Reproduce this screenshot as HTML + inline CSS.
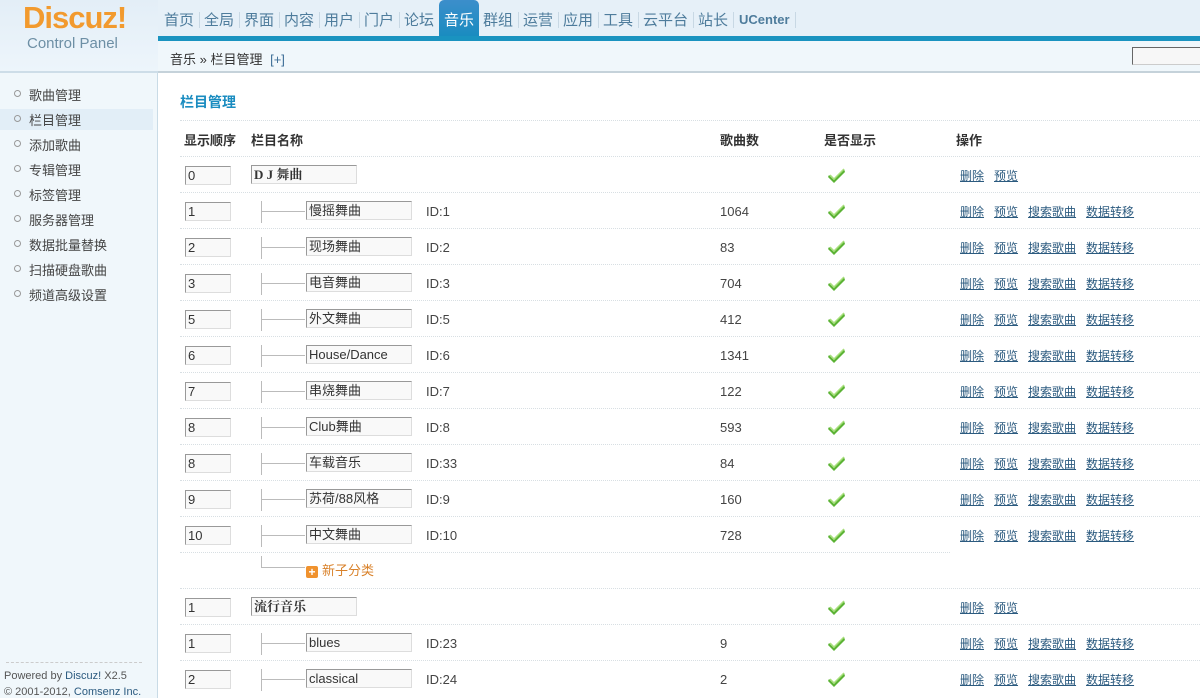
<!DOCTYPE html>
<html><head><meta charset="utf-8"><style>
*{margin:0;padding:0;box-sizing:border-box}
body{width:1200px;height:698px;overflow:hidden;background:#fff;font-family:"Liberation Sans","Noto Sans CJK SC",sans-serif;font-size:12px;color:#333;position:relative}
.abs{position:absolute}
#side{left:0;top:0;width:158px;height:698px;background:#f0f7fb;border-right:1px solid #c9dbe6}
#logohd{left:0;top:0;width:158px;height:73px;background:linear-gradient(#e3eef7,#edf5fb);border-bottom:2px solid #cddde8}
#top{left:158px;top:0;width:1042px;height:36px;background:#e6f0f8}
#bar{left:158px;top:36px;width:1042px;height:5px;background:#1a93c0}
#crumb{left:158px;top:41px;width:1042px;height:32px;background:#f0f7fb;border-bottom:2px solid #c5d2da}
.nav{position:absolute;top:9px;font-size:15px;color:#4e7c9c}
.sep{position:absolute;top:12px;width:1px;height:16px;background:#c8d8e4}
.menu{position:absolute;left:14px;font-size:13px;color:#444}
.menu:before{content:"";position:absolute;left:0;top:5px;width:5px;height:5px;border:1px solid #999;border-radius:50%}
.menu span{margin-left:15px}
.inp{position:absolute;height:19px;border:1px solid #999;border-right-color:#ddd;border-bottom-color:#ddd;background:#f9f9f9;font-size:13px;padding-left:2px;line-height:17px;color:#333}
.row{position:absolute;left:180px;width:1020px;height:36px;border-top:1px dotted #d8dfe3}
.tv{position:absolute;left:81px;top:8px;width:1px;height:22px;background:#bbb}
.th{position:absolute;left:81px;top:18px;width:44px;height:1px;background:#bbb}
.ops{position:absolute;left:780px;top:10px;font-size:12px;color:#2b5a7f}
.ops a{text-decoration:underline;color:#2b5a7f;margin-right:10px}
.ck{position:absolute;left:648px;top:10px}
.t{position:absolute;top:11px;font-size:13px;color:#444}
</style></head><body>
<div id="side" class="abs"></div>
<div id="logohd" class="abs">
<div class="abs" style="left:23px;top:0px;font-size:31px;font-weight:bold;color:#f29a2e;letter-spacing:-1px">Discuz!</div>
<div class="abs" style="left:27px;top:35px;font-size:15px;color:#6d8fa5">Control Panel</div>
</div>
<div id="top" class="abs"></div>
<div id="bar" class="abs"></div>
<div id="crumb" class="abs">
<div class="abs" style="left:12px;top:8px;font-size:13px;color:#333">音乐 » 栏目管理 <span style="color:#3c6d96;margin-left:4px">[+]</span></div>
<div class="abs" style="left:974px;top:6px;width:70px;height:18px;border:1px solid #666;border-right:none;border-bottom-color:#ccc;background:#f7f7f7"></div>
</div>
<div class="abs" style="left:439px;top:0;width:40px;height:36px;background:linear-gradient(#3c8ecb,#1a8cc0);border-radius:5px 5px 0 0"></div>
<span class="nav" style="left:164px">首页</span><i class="sep" style="left:199px"></i>
<span class="nav" style="left:204px">全局</span><i class="sep" style="left:239px"></i>
<span class="nav" style="left:244px">界面</span><i class="sep" style="left:279px"></i>
<span class="nav" style="left:284px">内容</span><i class="sep" style="left:319px"></i>
<span class="nav" style="left:324px">用户</span><i class="sep" style="left:359px"></i>
<span class="nav" style="left:364px">门户</span><i class="sep" style="left:399px"></i>
<span class="nav" style="left:404px">论坛</span>
<span class="nav" style="left:444px;color:#fff">音乐</span>
<span class="nav" style="left:483px">群组</span><i class="sep" style="left:518px"></i>
<span class="nav" style="left:523px">运营</span><i class="sep" style="left:558px"></i>
<span class="nav" style="left:563px">应用</span><i class="sep" style="left:598px"></i>
<span class="nav" style="left:603px">工具</span><i class="sep" style="left:638px"></i>
<span class="nav" style="left:643px">云平台</span><i class="sep" style="left:693px"></i>
<span class="nav" style="left:698px">站长</span><i class="sep" style="left:733px"></i>
<span class="nav" style="left:739px;font-size:13px;font-weight:bold;top:12px">UCenter</span><i class="sep" style="left:795px"></i>

<div class="menu" style="top:85px"><span>歌曲管理</span></div>
<div class="abs" style="left:0;top:109px;width:153px;height:21px;background:#e2eef7"></div>
<div class="menu" style="top:110px"><span>栏目管理</span></div>
<div class="menu" style="top:135px"><span>添加歌曲</span></div>
<div class="menu" style="top:160px"><span>专辑管理</span></div>
<div class="menu" style="top:185px"><span>标签管理</span></div>
<div class="menu" style="top:210px"><span>服务器管理</span></div>
<div class="menu" style="top:235px"><span>数据批量替换</span></div>
<div class="menu" style="top:260px"><span>扫描硬盘歌曲</span></div>
<div class="menu" style="top:285px"><span>频道高级设置</span></div>
<div class="abs" style="left:6px;top:662px;width:136px;border-top:1px dashed #ccc"></div>
<div class="abs" style="left:4px;top:668px;font-size:11px;color:#555;line-height:16px">Powered by <span style="color:#2b5a7f">Discuz!</span> X2.5<br>© 2001-2012, <span style="color:#2b5a7f">Comsenz Inc.</span></div>

<div class="abs" style="left:180px;top:92px;font-size:14px;font-weight:bold;color:#1a8cc0">栏目管理</div>
<div class="abs" style="left:180px;top:120px;width:1020px;border-top:1px dotted #d8dfe3"></div>
<div class="abs" style="left:184px;top:130px;font-size:13px;font-weight:bold;color:#333">显示顺序</div>
<div class="abs" style="left:251px;top:130px;font-size:13px;font-weight:bold;color:#333">栏目名称</div>
<div class="abs" style="left:720px;top:130px;font-size:13px;font-weight:bold;color:#333">歌曲数</div>
<div class="abs" style="left:824px;top:130px;font-size:13px;font-weight:bold;color:#333">是否显示</div>
<div class="abs" style="left:956px;top:130px;font-size:13px;font-weight:bold;color:#333">操作</div>

<svg width="0" height="0" style="position:absolute"><defs><g id="chk"><path d="M1 8 L6 13 L16 2 L17 5 L6 16 L0 10 Z" fill="#5cb335"/><path d="M2 8 L6 12 L16 2" stroke="#a8e07c" stroke-width="1.5" fill="none"/></g></defs></svg>
<div id="rows"></div>
<script>
var d=[["0","D J 舞曲","","",1,0],["1","慢摇舞曲","ID:1","1064",0,1],["2","现场舞曲","ID:2","83",0,1],["3","电音舞曲","ID:3","704",0,1],["5","外文舞曲","ID:5","412",0,1],["6","House/Dance","ID:6","1341",0,1],["7","串烧舞曲","ID:7","122",0,1],["8","Club舞曲","ID:8","593",0,1],["8","车载音乐","ID:33","84",0,1],["9","苏荷/88风格","ID:9","160",0,1],["10","中文舞曲","ID:10","728",0,1],null,["1","流行音乐","","",1,0],["1","blues","ID:23","9",0,1],["2","classical","ID:24","2",0,1]];
var h="";
d.forEach(function(r,i){var top=156+36*i;
h+='<div class="row" style="top:'+top+'px'+(i==11?';width:770px':'')+'">';
if(!r){h+='<div class="tv" style="top:3px;height:11px"></div><div class="th" style="top:14px"></div><div class="t" style="left:126px;top:7px;color:#d9822b"><span style="display:inline-block;width:12px;height:12px;background:#f0922e;border-radius:2px;color:#fff;font-size:12px;line-height:12px;text-align:center;font-weight:bold;vertical-align:-1px;margin-right:4px">+</span>新子分类</div></div>';return;}
h+='<div class="inp" style="left:5px;top:9px;width:46px">'+r[0]+'</div>';
if(r[4]){h+='<div class="inp" style="left:71px;top:8px;width:106px;font-weight:bold;font-family:\'Liberation Serif\',\'Noto Serif CJK SC\',serif">'+r[1]+'</div>';}
else{h+='<div class="tv"></div><div class="th"></div><div class="inp" style="left:126px;top:8px;width:106px">'+r[1]+'</div><div class="t" style="left:246px">'+r[2]+'</div><div class="t" style="left:540px">'+r[3]+'</div>';}
h+='<svg class="ck" width="18" height="17"><use href="#chk"/></svg>';
h+='<div class="ops"><a>删除</a><a>预览</a>'+(r[5]?'<a>搜索歌曲</a><a>数据转移</a>':'')+'</div></div>';});
document.getElementById("rows").innerHTML=h;
</script>
</body></html>
